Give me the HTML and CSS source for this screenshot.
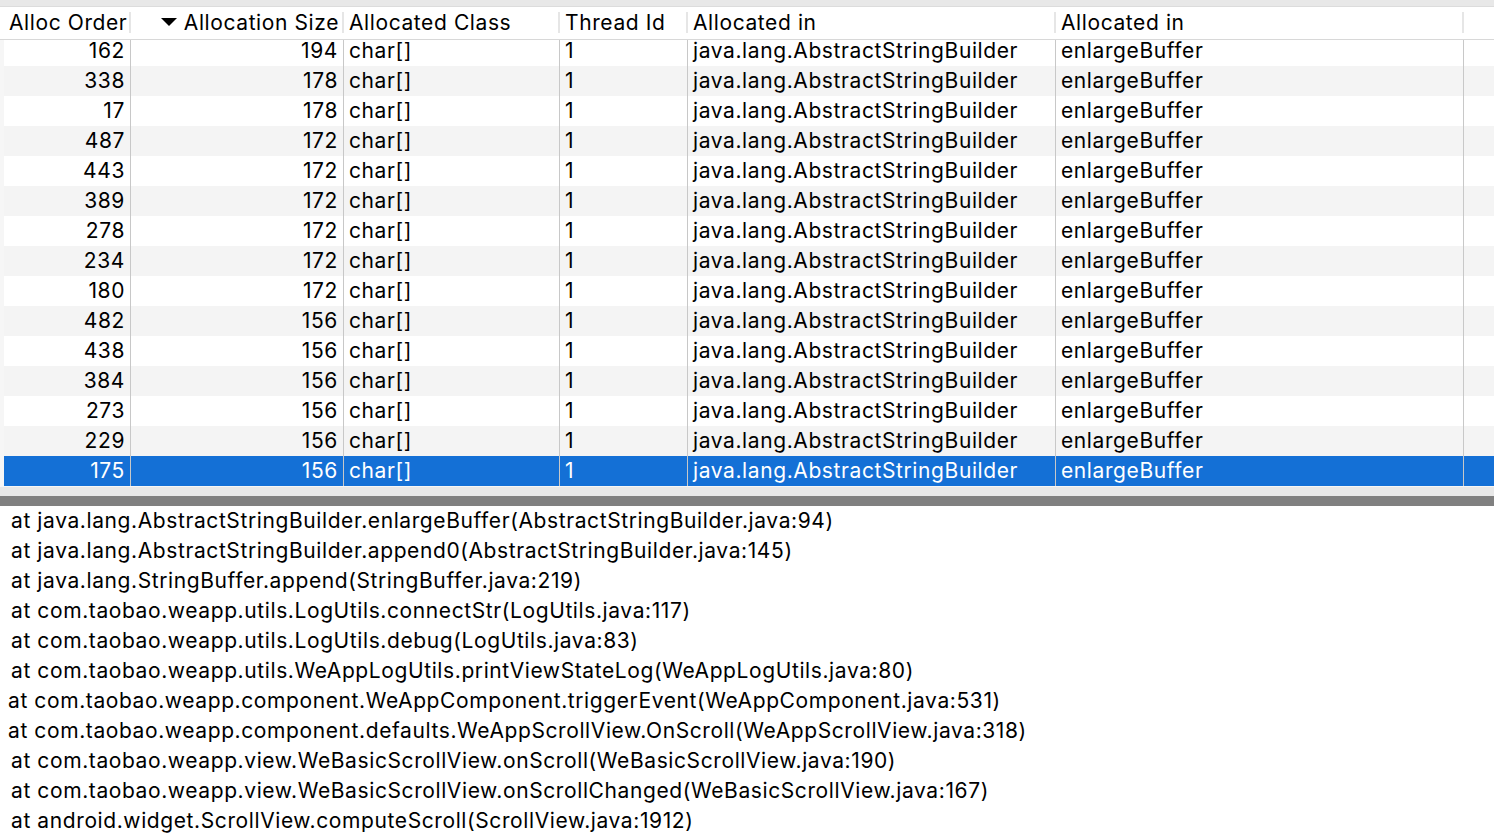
FILE: index.html
```html
<!DOCTYPE html>
<html>
<head>
<meta charset="utf-8">
<link rel="stylesheet" href="styles.css">
</head>
<body>
<div class="app">
  <div class="topbar"></div>
  <div class="grid header">
    <div class="hc">Alloc Order</div>
    <div class="hc num"><span class="sort"></span>Allocation Size</div>
    <div class="hc">Allocated Class</div>
    <div class="hc">Thread Id</div>
    <div class="hc">Allocated in</div>
    <div class="hc">Allocated in</div>
    <div class="hc last"></div>
  </div>
  <div class="body">
    <div class="grid row first"><div class="c num">162</div><div class="c num">194</div><div class="c">char[]</div><div class="c">1</div><div class="c">java.lang.AbstractStringBuilder</div><div class="c">enlargeBuffer</div><div class="c last"></div></div>
    <div class="grid row alt"><div class="c num">338</div><div class="c num">178</div><div class="c">char[]</div><div class="c">1</div><div class="c">java.lang.AbstractStringBuilder</div><div class="c">enlargeBuffer</div><div class="c last"></div></div>
    <div class="grid row"><div class="c num">17</div><div class="c num">178</div><div class="c">char[]</div><div class="c">1</div><div class="c">java.lang.AbstractStringBuilder</div><div class="c">enlargeBuffer</div><div class="c last"></div></div>
    <div class="grid row alt"><div class="c num">487</div><div class="c num">172</div><div class="c">char[]</div><div class="c">1</div><div class="c">java.lang.AbstractStringBuilder</div><div class="c">enlargeBuffer</div><div class="c last"></div></div>
    <div class="grid row"><div class="c num">443</div><div class="c num">172</div><div class="c">char[]</div><div class="c">1</div><div class="c">java.lang.AbstractStringBuilder</div><div class="c">enlargeBuffer</div><div class="c last"></div></div>
    <div class="grid row alt"><div class="c num">389</div><div class="c num">172</div><div class="c">char[]</div><div class="c">1</div><div class="c">java.lang.AbstractStringBuilder</div><div class="c">enlargeBuffer</div><div class="c last"></div></div>
    <div class="grid row"><div class="c num">278</div><div class="c num">172</div><div class="c">char[]</div><div class="c">1</div><div class="c">java.lang.AbstractStringBuilder</div><div class="c">enlargeBuffer</div><div class="c last"></div></div>
    <div class="grid row alt"><div class="c num">234</div><div class="c num">172</div><div class="c">char[]</div><div class="c">1</div><div class="c">java.lang.AbstractStringBuilder</div><div class="c">enlargeBuffer</div><div class="c last"></div></div>
    <div class="grid row"><div class="c num">180</div><div class="c num">172</div><div class="c">char[]</div><div class="c">1</div><div class="c">java.lang.AbstractStringBuilder</div><div class="c">enlargeBuffer</div><div class="c last"></div></div>
    <div class="grid row alt"><div class="c num">482</div><div class="c num">156</div><div class="c">char[]</div><div class="c">1</div><div class="c">java.lang.AbstractStringBuilder</div><div class="c">enlargeBuffer</div><div class="c last"></div></div>
    <div class="grid row"><div class="c num">438</div><div class="c num">156</div><div class="c">char[]</div><div class="c">1</div><div class="c">java.lang.AbstractStringBuilder</div><div class="c">enlargeBuffer</div><div class="c last"></div></div>
    <div class="grid row alt"><div class="c num">384</div><div class="c num">156</div><div class="c">char[]</div><div class="c">1</div><div class="c">java.lang.AbstractStringBuilder</div><div class="c">enlargeBuffer</div><div class="c last"></div></div>
    <div class="grid row"><div class="c num">273</div><div class="c num">156</div><div class="c">char[]</div><div class="c">1</div><div class="c">java.lang.AbstractStringBuilder</div><div class="c">enlargeBuffer</div><div class="c last"></div></div>
    <div class="grid row alt"><div class="c num">229</div><div class="c num">156</div><div class="c">char[]</div><div class="c">1</div><div class="c">java.lang.AbstractStringBuilder</div><div class="c">enlargeBuffer</div><div class="c last"></div></div>
    <div class="grid row sel"><div class="c num">175</div><div class="c num">156</div><div class="c">char[]</div><div class="c">1</div><div class="c">java.lang.AbstractStringBuilder</div><div class="c">enlargeBuffer</div><div class="c last"></div></div>
  </div>
  <div class="tablefoot"></div>
  <div class="splitter"></div>
  <div class="trace">
    <div class="line">at java.lang.AbstractStringBuilder.enlargeBuffer(AbstractStringBuilder.java:94)</div>
    <div class="line">at java.lang.AbstractStringBuilder.append0(AbstractStringBuilder.java:145)</div>
    <div class="line">at java.lang.StringBuffer.append(StringBuffer.java:219)</div>
    <div class="line">at com.taobao.weapp.utils.LogUtils.connectStr(LogUtils.java:117)</div>
    <div class="line">at com.taobao.weapp.utils.LogUtils.debug(LogUtils.java:83)</div>
    <div class="line">at com.taobao.weapp.utils.WeAppLogUtils.printViewStateLog(WeAppLogUtils.java:80)</div>
    <div class="line out">at com.taobao.weapp.component.WeAppComponent.triggerEvent(WeAppComponent.java:531)</div>
    <div class="line out">at com.taobao.weapp.component.defaults.WeAppScrollView.OnScroll(WeAppScrollView.java:318)</div>
    <div class="line">at com.taobao.weapp.view.WeBasicScrollView.onScroll(WeBasicScrollView.java:190)</div>
    <div class="line">at com.taobao.weapp.view.WeBasicScrollView.onScrollChanged(WeBasicScrollView.java:167)</div>
    <div class="line">at android.widget.ScrollView.computeScroll(ScrollView.java:1912)</div>
  </div>
</div>
</body>
</html>
```
FILE: styles.css
```css
* { box-sizing: border-box; }
html, body { margin: 0; padding: 0; background: #fff; }
body {
  width: 1494px;
  height: 840px;
  overflow: hidden;
  font-family: Inter, "Noto Sans", sans-serif;
  font-size: 21px;
  letter-spacing: 0.6px;
  color: #000;
}
.topbar {
  height: 7px;
  background: #e8e8e8;
  border-bottom: 1px solid #dcdcdc;
}
.grid {
  display: grid;
  grid-template-columns: 127px 213px 216px 128px 368px 408px 1fr;
}
.header {
  height: 33px;
  padding-left: 4px;
  background: #fff;
  border-bottom: 1px solid #d8d8d8;
}
.hc {
  position: relative;
  padding: 0 5px;
  line-height: 32px;
  white-space: nowrap;
}
.hc::after {
  content: "";
  position: absolute;
  right: 0;
  top: 5px;
  height: 21px;
  width: 2px;
  background: #e6e6e6;
}
.hc.last::after { display: none; }
.num { text-align: right; }
.sort {
  display: inline-block;
  width: 0;
  height: 0;
  border-left: 8px solid transparent;
  border-right: 8px solid transparent;
  border-top: 8px solid #000;
  margin-right: 7px;
  vertical-align: 4px;
}
.body {
  padding-left: 4px;
  background: #f6f6f6;
}
.row {
  height: 30px;
  background: #fff;
}
.row.first { height: 26px; }
.row.alt { background: #f4f4f4; }
.row.sel { background: #1470d6; color: #fff; }
.c {
  line-height: 30px;
  padding: 0 5px;
  white-space: nowrap;
  border-right: 1px solid #c8c8c8;
}
.row.first .c {
  line-height: 21px;
  padding-bottom: 5px;
}
.c.last { border-right: none; }
.tablefoot {
  height: 10px;
  background: #e8e8e8;
  border-top: 1px solid #f6f6f6;
}
.splitter {
  height: 10px;
  background: #808080;
}
.line {
  height: 30px;
  line-height: 30px;
  padding-left: 11px;
  white-space: nowrap;
}
.line.out { padding-left: 8px; }
```
